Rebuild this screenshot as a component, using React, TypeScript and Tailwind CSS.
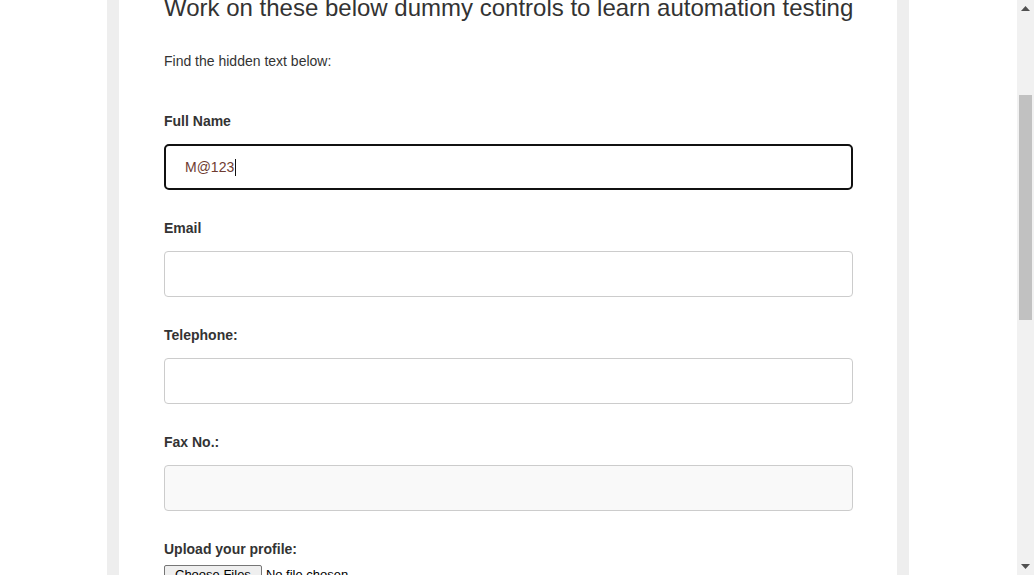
import React from 'react';

const fields = [
  { label: 'Email', disabled: false },
  { label: 'Telephone:', disabled: false },
  { label: 'Fax No.:', disabled: true },
];

const Scrollbar: React.FC = () => (
  <div className="flex h-full w-[17px] shrink-0 flex-col bg-[#f1f1f1]">
    <div className="flex h-[17px] items-center justify-center">
      <svg width="9" height="5" viewBox="0 0 9 5">
        <path d="M0 5 L4.5 0 L9 5 Z" fill="#505050" />
      </svg>
    </div>
    <div className="mt-[78px] mx-[2px] h-[225px] bg-[#c1c1c1]" />
    <div className="flex-1" />
    <div className="flex h-[17px] items-center justify-center">
      <svg width="9" height="5" viewBox="0 0 9 5">
        <path d="M0 0 L9 0 L4.5 5 Z" fill="#505050" />
      </svg>
    </div>
  </div>
);

export default function App() {
  return (
    <div className="flex h-[575px] w-[1034px] overflow-hidden bg-white font-['Liberation_Sans',Arial,sans-serif] text-[#333]">
      <div className="flex-1">
        <div className="ml-[107px] h-full w-[802px] bg-[#eee] px-[12px]">
          <div className="flow-root h-full bg-white pl-[45px] pr-[44px]">
            <h3 className="-mt-[5px] whitespace-nowrap text-[24px] leading-[26px] font-normal text-[#333]">
              Work on these below dummy controls to learn automation testing
            </h3>
            <p className="mt-[30px] text-[14px] leading-[20px]">Find the hidden text below:</p>

            <div className="mt-[40px]">
              <div className="text-[14px] leading-[20px] font-bold">Full Name</div>
              <div className="mt-[13px] flex h-[46px] items-center rounded-[5px] border-2 border-[#111] pl-[19px] text-[14px] text-[#6e3b30]">
                <span>M@123</span>
                <span className="ml-px inline-block h-[17px] w-px bg-[#111]" />
              </div>
            </div>

            {fields.map((f) => (
              <div key={f.label} className="mt-[28px]">
                <div className="text-[14px] leading-[20px] font-bold">{f.label}</div>
                <div
                  className={
                    f.disabled
                      ? 'mt-[13px] h-[46px] rounded-[4px] border border-[#ccc] bg-[#f9f9f9]'
                      : 'mt-[13px] h-[46px] rounded-[4px] border border-[#ccc] bg-white'
                  }
                />
              </div>
            ))}

            <div className="mt-[28px]">
              <div className="text-[14px] leading-[20px] font-bold">Upload your profile:</div>
              <div className="mt-[6px] flex items-center text-[13px] leading-[16px]">
                <span className="rounded-[2px] border border-[#767676] bg-[#efefef] px-[10px] py-[1px] text-black">
                  Choose Files
                </span>
                <span className="ml-[4px] text-black">No file chosen</span>
              </div>
            </div>
          </div>
        </div>
      </div>
      <Scrollbar />
    </div>
  );
}
